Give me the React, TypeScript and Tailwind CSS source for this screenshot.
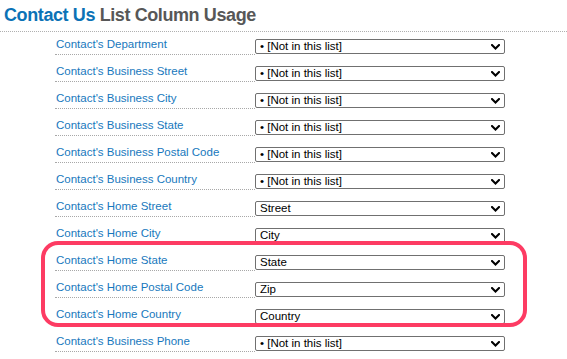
import React from "react";

const rows: [string, string][] = [
  ["Contact's Department", "• [Not in this list]"],
  ["Contact's Business Street", "• [Not in this list]"],
  ["Contact's Business City", "• [Not in this list]"],
  ["Contact's Business State", "• [Not in this list]"],
  ["Contact's Business Postal Code", "• [Not in this list]"],
  ["Contact's Business Country", "• [Not in this list]"],
  ["Contact's Home Street", "Street"],
  ["Contact's Home City", "City"],
  ["Contact's Home State", "State"],
  ["Contact's Home Postal Code", "Zip"],
  ["Contact's Home Country", "Country"],
  ["Contact's Business Phone", "• [Not in this list]"],
];

function Chevron() {
  return (
    <svg width="9" height="6" viewBox="0 0 9 6" className="shrink-0">
      <path d="M1 1 L4.5 4.5 L8 1" fill="none" stroke="#000" strokeWidth="2" strokeLinecap="square" />
    </svg>
  );
}

export default function App() {
  return (
    <div
      className="relative w-[567px] h-[359px] overflow-hidden bg-white"
      style={{ fontFamily: '"Liberation Sans", Arial, sans-serif' }}
    >
      <div className="h-[32px] border-b border-dotted border-[#b0b0b0] pl-[4px] pt-[4px] text-[18px] leading-[22px] font-bold tracking-[-0.4px] whitespace-nowrap">
        <span className="text-[#0b72b6]">Contact Us</span>{" "}
        <span className="text-[#575757]">List Column Usage</span>
      </div>
      <div className="flex flex-col gap-[4px] pl-[55px]">
        {rows.map(([label, value]) => (
          <div key={label} className="flex items-end h-[23px]">
            <div className="w-[200px] h-[23px] border-b border-dotted border-[#a8a8a8] flex items-end pl-[1px] pb-[3px] text-[11.5px] leading-[14px] text-[#1778bd] whitespace-nowrap">
              {label}
            </div>
            <div className="w-[250px] h-[15px] mb-[1px] border border-[#707070] rounded-[2px] flex items-center justify-between pl-[4px] pr-[4px] text-[11.5px] leading-[13px] text-black whitespace-nowrap">
              <span>{value}</span>
              <Chevron />
            </div>
          </div>
        ))}
      </div>
      <div className="absolute left-[41px] top-[241px] w-[486px] h-[86px] border-[4px] border-[#fd3b63] rounded-[17px]" />
    </div>
  );
}
